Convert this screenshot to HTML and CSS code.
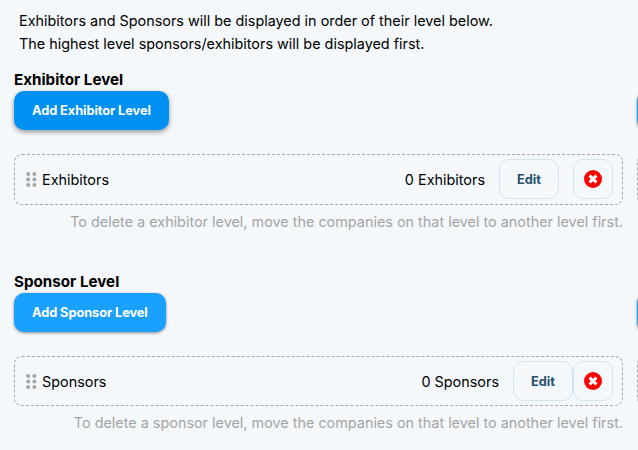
FILE: index.html
```html
<!DOCTYPE html>
<html lang="en">
<head>
    <meta charset="UTF-8">
    <meta name="viewport" content="width=device-width, initial-scale=1.0">
    <title>Exhibitor and Sponsor Levels</title>
    <link rel="stylesheet" href="styles.css">
</head>
<body>
    <svg class="icon-defs">
        <symbol id="grip" viewBox="0 0 11 15">
            <circle cx="2.2" cy="2" r="2" /><circle cx="8.4" cy="2" r="2" />
            <circle cx="2.2" cy="7.6" r="2" /><circle cx="8.4" cy="7.6" r="2" />
            <circle cx="2.2" cy="13" r="2" /><circle cx="8.4" cy="13" r="2" />
        </symbol>
        <symbol id="remove" viewBox="0 0 18 18">
            <circle cx="9" cy="9" r="9" fill="#ff0000" />
            <path d="M5.6 5.6l6.8 6.8M12.4 5.6l-6.8 6.8" stroke="#ffffff" stroke-width="3" />
        </symbol>
    </svg>

    <div class="intro">
        <div>Exhibitors and Sponsors will be displayed in order of their level below.</div>
        <div>The highest level sponsors/exhibitors will be displayed first.</div>
    </div>

    <div class="level-row">
        <div class="level-column">
            <h2>Exhibitor Level</h2>
            <button class="add-button active">Add Exhibitor Level</button>
            <div class="level-box">
                <svg class="grip"><use href="#grip" /></svg>
                <span class="level-name">Exhibitors</span>
                <span class="level-count">0 Exhibitors</span>
                <button class="outline-button edit-button spaced">Edit</button>
                <button class="outline-button delete-button" aria-label="Delete"><svg><use href="#remove" /></svg></button>
            </div>
            <p class="hint">To delete a exhibitor level, move the companies on that level to another level first.</p>
        </div>
        <div class="next-column">
            <div class="add-button"></div>
            <div class="level-box"></div>
        </div>
    </div>

    <div class="level-row sponsor-row">
        <div class="level-column">
            <h2>Sponsor Level</h2>
            <button class="add-button">Add Sponsor Level</button>
            <div class="level-box">
                <svg class="grip"><use href="#grip" /></svg>
                <span class="level-name">Sponsors</span>
                <span class="level-count">0 Sponsors</span>
                <button class="outline-button edit-button">Edit</button>
                <button class="outline-button delete-button" aria-label="Delete"><svg><use href="#remove" /></svg></button>
            </div>
            <p class="hint">To delete a sponsor level, move the companies on that level to another level first.</p>
        </div>
        <div class="next-column">
            <div class="add-button"></div>
            <div class="level-box"></div>
        </div>
    </div>
</body>
</html>
```
FILE: styles.css
```css
* {
    box-sizing: border-box;
}

body {
    margin: 0;
    padding: 9px 0 0 14px;
    overflow: hidden;
    background-color: #f4f8fb;
    color: #000;
    font-family: Inter, sans-serif;
    font-size: 14.4px;
}

.icon-defs {
    display: none;
}

.intro {
    padding-left: 5px;
    line-height: 23px;
}

.level-row {
    display: flex;
    gap: 10px;
    height: 202px;
    padding-top: 15px;
}

.level-column {
    flex: 0 0 609px;
}

/* second column runs off the edge, the left padding leaves room for the button shadow */
.next-column {
    flex: 1;
    min-width: 0;
    padding: 21px 0 0 4px;
    overflow: hidden;
}

h2 {
    margin: 0;
    height: 21px;
    font-size: 15.2px;
    font-weight: 700;
    line-height: 19px;
}

.add-button {
    display: block;
    min-width: 120px;
    height: 39px;
    padding: 0 18px;
    border: none;
    border-radius: 10px;
    background-color: #1aa1ff;
    box-shadow: 0 1px 3px rgba(0, 0, 0, 0.45);
    color: #fff;
    font-family: inherit;
    font-size: 12.8px;
    font-weight: 700;
    letter-spacing: -0.08px;
    cursor: pointer;
}

.add-button.active {
    background-color: #0090f2;
    box-shadow: 0 2px 5px rgba(0, 0, 0, 0.4);
}

.level-box {
    display: flex;
    align-items: center;
    height: 51px;
    margin-top: 24px;
    padding: 0 9px 1px 11px;
    border: 1px dashed #a5a8aa;
    border-radius: 8px;
}

.sponsor-row .level-box {
    height: 50px;
    padding-bottom: 0;
}

.next-column .level-box {
    width: 609px;
}

.grip {
    width: 11px;
    height: 15px;
    margin-right: 5px;
    fill: #a5a5a5;
}

.level-name {
    padding-top: 1px;
}

.level-count {
    margin-left: auto;
    margin-right: 14px;
}

.outline-button {
    height: 40px;
    padding: 0;
    border: 1px solid #d3e4f0;
    border-radius: 10px;
    background-color: transparent;
    color: #24506b;
    font-family: inherit;
    font-size: 12.8px;
    font-weight: 700;
    cursor: pointer;
}

.edit-button {
    width: 60px;
}

.edit-button.spaced {
    margin-right: 14px;
}

.delete-button {
    display: flex;
    align-items: center;
    justify-content: center;
    width: 40px;
}

.delete-button svg {
    width: 18px;
    height: 18px;
}

.hint {
    margin: 8px 0 0;
    color: #a5a5a5;
    line-height: 18px;
    text-align: right;
}
```
